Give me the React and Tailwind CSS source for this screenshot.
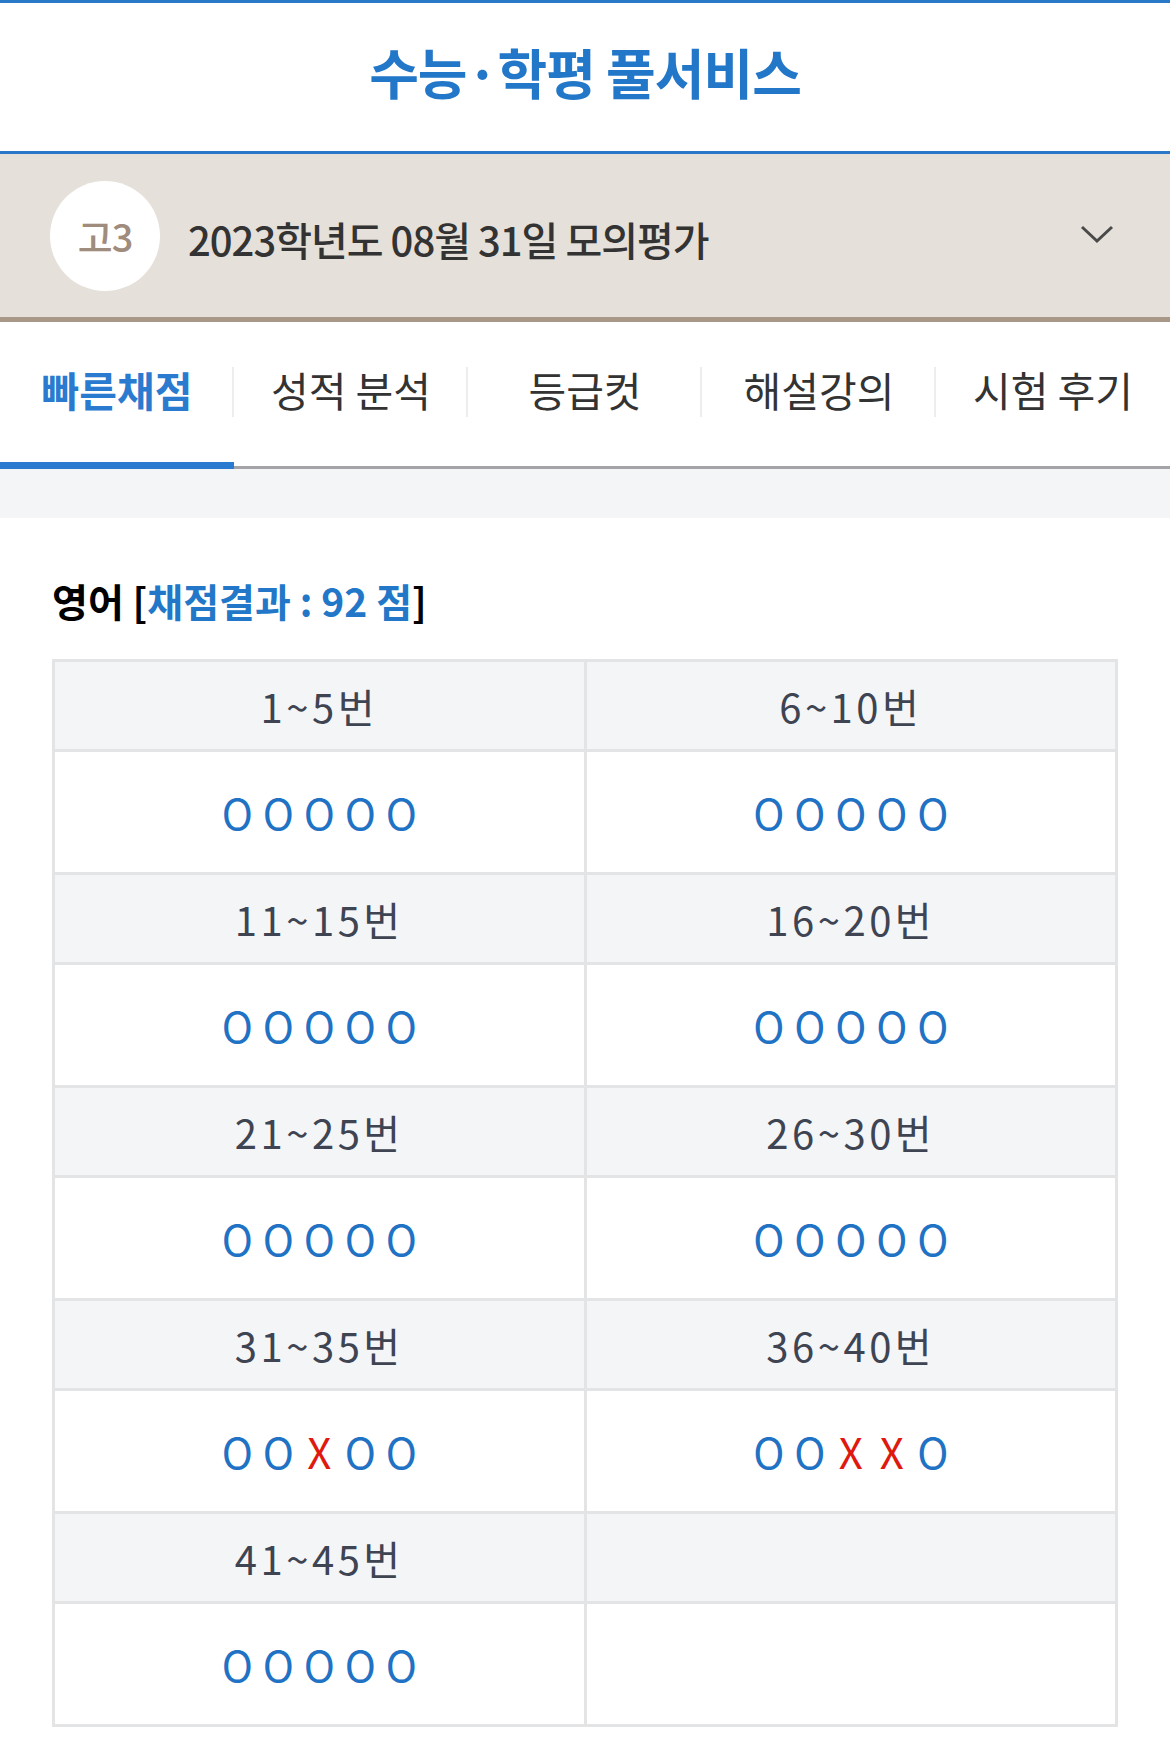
import React from 'react';

const tabs = ['빠른채점', '성적 분석', '등급컷', '해설강의', '시험 후기'];

const blocks = [
  { range: '1~5번', marks: 'OOOOO' },
  { range: '6~10번', marks: 'OOOOO' },
  { range: '11~15번', marks: 'OOOOO' },
  { range: '16~20번', marks: 'OOOOO' },
  { range: '21~25번', marks: 'OOOOO' },
  { range: '26~30번', marks: 'OOOOO' },
  { range: '31~35번', marks: 'OOXOO' },
  { range: '36~40번', marks: 'OOXXO' },
  { range: '41~45번', marks: 'OOOOO' },
  { range: '', marks: '' },
];

function Marks({ marks }) {
  return (
    <div className="flex items-center justify-center">
      {marks.split('').map((m, i) => (
        <span
          key={i}
          className={`w-[41px] text-center text-[42px] leading-none ${m === 'X' ? 'text-[#e0190f]' : 'text-[#1f72c4]'}`}
        >
          {m}
        </span>
      ))}
    </div>
  );
}

function Cell({ range, marks }) {
  return (
    <div className="flex flex-col">
      <div className="h-[90px] flex items-center justify-center bg-[#f4f5f7] border-r-[3px] border-b-[3px] border-[#e3e4e6] text-[40px] tracking-[3.5px] text-[#3e4452]">
        {range}
      </div>
      <div className="h-[123px] flex items-center justify-center bg-white border-r-[3px] border-b-[3px] border-[#e3e4e6]">
        <Marks marks={marks} />
      </div>
    </div>
  );
}

export default function App() {
  return (
    <div className="w-[1170px] min-h-[1758px] bg-white font-['Noto_Sans_CJK_KR','Noto_Sans',sans-serif]">
      {/* header */}
      <header className="h-[154px] border-t-[3px] border-b-[3px] border-[#2a78c8] flex items-center justify-center pb-[12px]">
        <h1 className="text-[54px] font-bold text-[#2277c8] tracking-[-1px]">수능·학평 풀서비스</h1>
      </header>

      {/* exam selector */}
      <div className="h-[168px] bg-[#e5e0d9] border-b-[5px] border-[#a99787] flex items-center pl-[50px] pr-[56px]">
        <div className="w-[110px] h-[110px] rounded-full bg-white flex items-center justify-center text-[38px] text-[#a08c7c] font-medium tracking-[-1px]">
          고3
        </div>
        <p className="ml-[28px] pt-[6px] flex-1 text-[40px] font-medium text-[#333333] tracking-[-1px]">
          2023학년도 08월 31일 모의평가
        </p>
        <svg width="34" height="20" viewBox="0 0 34 20" fill="none" className="mb-1">
          <polyline points="2,3 17,17 32,3" stroke="#4a4a4a" strokeWidth="3" />
        </svg>
      </div>

      {/* tabs */}
      <nav className="h-[147px] grid grid-cols-5 border-b-[3px] border-[#a3a3a8]">
        {tabs.map((t, i) => (
          <div key={t} className="relative flex items-center justify-center pb-2">
            <span
              className={`text-[41px] ${i === 0 ? 'font-bold text-[#2a7bd0]' : 'text-[#333333]'}`}
            >
              {t}
            </span>
            {i < 4 && <div className="absolute right-0 top-[45px] h-[50px] w-[2px] bg-[#ededed]" />}
            {i === 0 && <div className="absolute left-0 right-0 -bottom-[3px] h-[7px] bg-[#2a7bd0]" />}
          </div>
        ))}
      </nav>

      <div className="h-[49px] bg-[#f4f5f7]" />

      {/* result */}
      <section className="px-[52px] pt-[60px]">
        <h2 className="text-[39px] font-bold text-black leading-[44px]">
          영어 [<span className="text-[#2277c8]">채점결과 : 92 점</span>]
        </h2>
        <div className="mt-[37px] grid grid-cols-2 border-l-[3px] border-t-[3px] border-[#e3e4e6]">
          {blocks.map((b, i) => (
            <Cell key={i} range={b.range} marks={b.marks} />
          ))}
        </div>
      </section>
    </div>
  );
}
